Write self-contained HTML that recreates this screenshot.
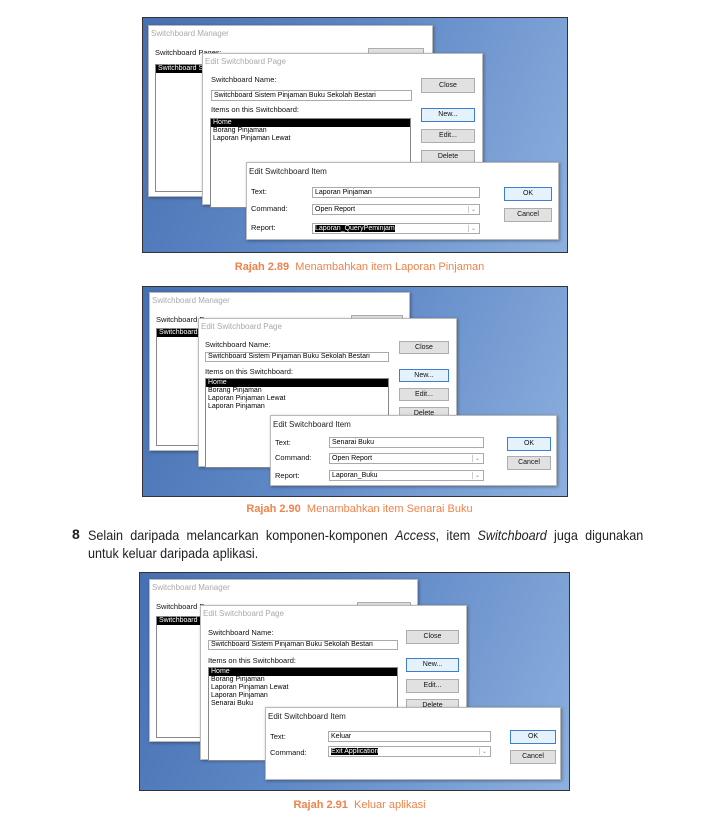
<!DOCTYPE html>
<html><head><meta charset="utf-8"><style>
*{margin:0;padding:0;box-sizing:border-box}
body{width:719px;height:833px;background:#fff;position:relative;font-family:"Liberation Sans",sans-serif;overflow:hidden}
.a{position:absolute}
.box{position:absolute;background:linear-gradient(115deg,#4670b2 0%,#5f88c6 45%,#8db0de 100%);border:1px solid #333}
.win{position:absolute;background:#fff;border:1px solid #b9b9b9;box-shadow:1px 1px 3px rgba(0,0,0,.35)}
.t{position:absolute;font-size:7.5px;color:#111;white-space:nowrap}
.tt{position:absolute;font-size:8px;color:#aaa;white-space:nowrap}
.ti{position:absolute;font-size:8px;color:#222;white-space:nowrap}
.inp{position:absolute;border:1px solid #aaa;background:#fff;font-size:7px;padding-left:2px;line-height:9px;white-space:nowrap;overflow:hidden}
.list{position:absolute;border:1px solid #888;background:#fff;font-size:7px;line-height:8px}
.sel{background:#000;color:#fff}
.btn{position:absolute;border:1px solid #adadad;background:#e1e1e1;font-size:7px;text-align:center;color:#111}
.bb{border:1px solid #3c7fd1;background:#e5f1fb}
.dd{position:absolute;right:1px;top:1px;bottom:1px;width:10px;border-left:1px solid #ccc;font-size:6px;color:#888;text-align:center}
.cap{position:absolute;left:0;width:719px;text-align:center;color:#f0824a;font-size:11px}
.cap b{font-weight:bold}
.p{position:absolute;left:88px;width:617px;transform:scaleX(0.9);transform-origin:0 0;font-size:14px;line-height:18px;color:#222;white-space:nowrap}
</style></head><body>

<!-- Figure 1 -->
<div class="box" style="left:142px;top:17px;width:426px;height:236px"></div>
<div class="win" style="left:148px;top:25px;width:285px;height:172px">
 <div class="tt" style="left:2px;top:3px">Switchboard Manager</div>
 <div class="t" style="left:6px;top:22px">Switchboard Pages:</div>
 <div class="btn" style="left:219px;top:22px;width:56px;height:12px"></div>
 <div class="list" style="left:6px;top:38px;width:60px;height:128px"><div class="sel" style="padding-left:2px">Switchboard S</div></div>
</div>
<div class="win" style="left:202px;top:53px;width:281px;height:152px">
 <div class="tt" style="left:2px;top:3px">Edit Switchboard Page</div>
 <div class="t" style="left:8px;top:21px">Switchboard Name:</div>
 <div class="inp" style="left:8px;top:36px;width:201px;height:11px">Switchboard Sistem Pinjaman Buku Sekolah Bestari</div>
 <div class="t" style="left:8px;top:51px">Items on this Switchboard:</div>
 <div class="list" style="left:7px;top:64px;width:201px;height:90px"><div class="sel" style="padding-left:2px">Home</div><div style="padding-left:2px">Borang Pinjaman</div><div style="padding-left:2px">Laporan Pinjaman Lewat</div></div>
 <div class="btn" style="left:218px;top:24px;width:54px;height:15px;line-height:13px">Close</div>
 <div class="btn bb" style="left:218px;top:54px;width:54px;height:14px;line-height:12px">New...</div>
 <div class="btn" style="left:218px;top:75px;width:54px;height:14px;line-height:12px">Edit...</div>
 <div class="btn" style="left:218px;top:96px;width:54px;height:14px;line-height:12px">Delete</div>
</div>
<div class="win" style="left:246px;top:162px;width:313px;height:78px">
 <div class="ti" style="left:2px;top:4px">Edit Switchboard Item</div>
 <div class="t" style="left:4px;top:24px">Text:</div>
 <div class="t" style="left:4px;top:41px">Command:</div>
 <div class="t" style="left:4px;top:60px">Report:</div>
 <div class="inp" style="left:65px;top:24px;width:168px;height:11px">Laporan Pinjaman</div>
 <div class="inp" style="left:65px;top:41px;width:168px;height:11px">Open Report<div class="dd">⌄</div></div>
 <div class="inp" style="left:65px;top:60px;width:168px;height:11px"><span class="sel">Laporan_QueryPeminjam</span><div class="dd">⌄</div></div>
 <div class="btn bb" style="left:257px;top:24px;width:48px;height:14px;line-height:12px">OK</div>
 <div class="btn" style="left:257px;top:45px;width:48px;height:14px;line-height:12px">Cancel</div>
</div>
<div class="cap" style="top:261px"><b>Rajah 2.89</b>&nbsp; Menambahkan item Laporan Pinjaman</div>

<!-- Figure 2 -->
<div class="box" style="left:142px;top:286px;width:426px;height:211px"></div>
<div class="win" style="left:149px;top:292px;width:261px;height:159px">
 <div class="tt" style="left:2px;top:3px">Switchboard Manager</div>
 <div class="t" style="left:6px;top:22px">Switchboard Pages:</div>
 <div class="btn" style="left:201px;top:22px;width:52px;height:12px"></div>
 <div class="list" style="left:6px;top:35px;width:50px;height:118px"><div class="sel" style="padding-left:2px">Switchboard S</div></div>
</div>
<div class="win" style="left:198px;top:318px;width:259px;height:149px">
 <div class="tt" style="left:2px;top:3px">Edit Switchboard Page</div>
 <div class="t" style="left:6px;top:21px">Switchboard Name:</div>
 <div class="inp" style="left:6px;top:33px;width:184px;height:10px;line-height:8px">Switchboard Sistem Pinjaman Buku Sekolah Bestari</div>
 <div class="t" style="left:6px;top:48px">Items on this Switchboard:</div>
 <div class="list" style="left:6px;top:59px;width:184px;height:90px"><div class="sel" style="padding-left:2px">Home</div><div style="padding-left:2px">Borang Pinjaman</div><div style="padding-left:2px">Laporan Pinjaman Lewat</div><div style="padding-left:2px">Laporan Pinjaman</div></div>
 <div class="btn" style="left:200px;top:22px;width:50px;height:13px;line-height:11px">Close</div>
 <div class="btn bb" style="left:200px;top:50px;width:50px;height:13px;line-height:11px">New...</div>
 <div class="btn" style="left:200px;top:69px;width:50px;height:13px;line-height:11px">Edit...</div>
 <div class="btn" style="left:200px;top:88px;width:50px;height:13px;line-height:11px">Delete</div>
</div>
<div class="win" style="left:270px;top:415px;width:287px;height:71px">
 <div class="ti" style="left:2px;top:4px">Edit Switchboard Item</div>
 <div class="t" style="left:4px;top:22px">Text:</div>
 <div class="t" style="left:4px;top:37px">Command:</div>
 <div class="t" style="left:4px;top:55px">Report:</div>
 <div class="inp" style="left:58px;top:21px;width:155px;height:11px">Senarai Buku</div>
 <div class="inp" style="left:58px;top:37px;width:155px;height:11px">Open Report<div class="dd">⌄</div></div>
 <div class="inp" style="left:58px;top:54px;width:155px;height:11px">Laporan_Buku<div class="dd">⌄</div></div>
 <div class="btn bb" style="left:236px;top:21px;width:44px;height:14px;line-height:12px">OK</div>
 <div class="btn" style="left:236px;top:40px;width:44px;height:14px;line-height:12px">Cancel</div>
</div>
<div class="cap" style="top:503px"><b>Rajah 2.90</b>&nbsp; Menambahkan item Senarai Buku</div>

<!-- Paragraph -->
<div class="a" style="left:72px;top:526px;font-size:14px;font-weight:bold;color:#222">8</div>
<div class="p" style="top:526px;white-space:normal;text-align:justify;text-align-last:justify">Selain daripada melancarkan komponen-komponen <i>Access</i>, item <i>Switchboard</i> juga digunakan</div>
<div class="p" style="top:544px">untuk keluar daripada aplikasi.</div>

<!-- Figure 3 -->
<div class="box" style="left:139px;top:572px;width:431px;height:219px"></div>
<div class="win" style="left:149px;top:579px;width:269px;height:163px">
 <div class="tt" style="left:2px;top:3px">Switchboard Manager</div>
 <div class="t" style="left:6px;top:22px">Switchboard Pages:</div>
 <div class="btn" style="left:207px;top:22px;width:54px;height:12px"></div>
 <div class="list" style="left:6px;top:36px;width:52px;height:122px"><div class="sel" style="padding-left:2px">Switchboard S</div></div>
</div>
<div class="win" style="left:200px;top:605px;width:267px;height:155px">
 <div class="tt" style="left:2px;top:3px">Edit Switchboard Page</div>
 <div class="t" style="left:7px;top:22px">Switchboard Name:</div>
 <div class="inp" style="left:7px;top:34px;width:190px;height:10px;line-height:8px">Switchboard Sistem Pinjaman Buku Sekolah Bestari</div>
 <div class="t" style="left:7px;top:50px">Items on this Switchboard:</div>
 <div class="list" style="left:7px;top:61px;width:190px;height:94px"><div class="sel" style="padding-left:2px">Home</div><div style="padding-left:2px">Borang Pinjaman</div><div style="padding-left:2px">Laporan Pinjaman Lewat</div><div style="padding-left:2px">Laporan Pinjaman</div><div style="padding-left:2px">Senarai Buku</div></div>
 <div class="btn" style="left:205px;top:24px;width:53px;height:14px;line-height:12px">Close</div>
 <div class="btn bb" style="left:205px;top:52px;width:53px;height:14px;line-height:12px">New...</div>
 <div class="btn" style="left:205px;top:73px;width:53px;height:14px;line-height:12px">Edit...</div>
 <div class="btn" style="left:205px;top:93px;width:53px;height:14px;line-height:12px">Delete</div>
</div>
<div class="win" style="left:265px;top:707px;width:296px;height:73px">
 <div class="ti" style="left:2px;top:4px">Edit Switchboard Item</div>
 <div class="t" style="left:4px;top:24px">Text:</div>
 <div class="t" style="left:4px;top:40px">Command:</div>
 <div class="inp" style="left:62px;top:23px;width:163px;height:11px">Keluar</div>
 <div class="inp" style="left:62px;top:38px;width:163px;height:11px"><span class="sel">Exit Application</span><div class="dd">⌄</div></div>
 <div class="btn bb" style="left:244px;top:22px;width:46px;height:14px;line-height:12px">OK</div>
 <div class="btn" style="left:244px;top:42px;width:46px;height:14px;line-height:12px">Cancel</div>
</div>
<div class="cap" style="top:799px"><b>Rajah 2.91</b>&nbsp; Keluar aplikasi</div>

</body></html>
